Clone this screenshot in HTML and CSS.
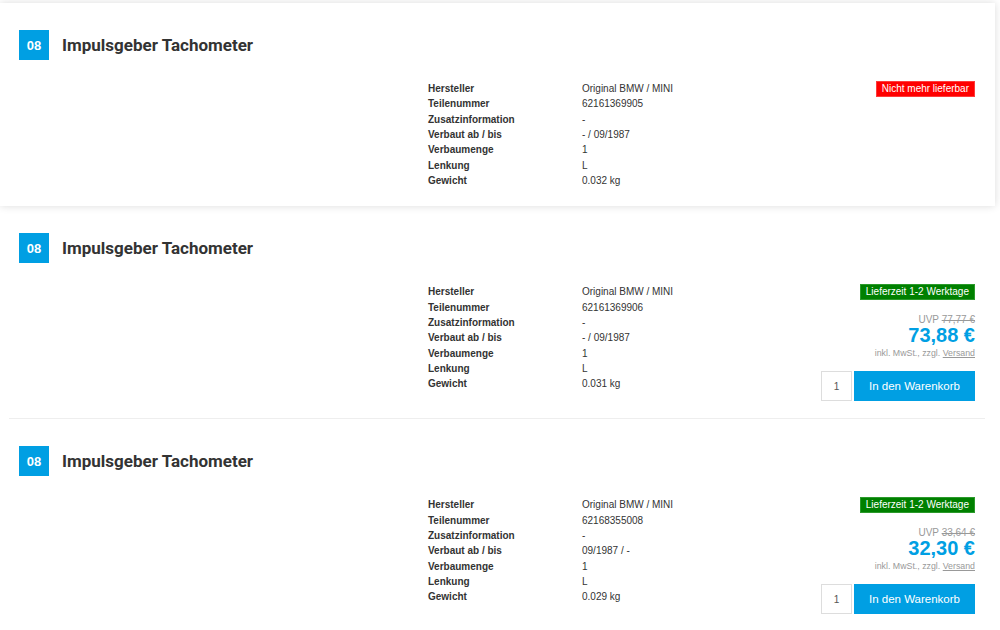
FILE: index.html
```html
<!DOCTYPE html>
<html lang="de">
<head>
    <meta charset="UTF-8">
    <meta name="viewport" content="width=device-width, initial-scale=1.0">
    <title>Impulsgeber Tachometer</title>
    <link rel="stylesheet" href="styles.css">
</head>
<body>
    <div class="part-list">

        <div class="part is-hover">
            <div class="part-inner">
                <div class="part-head">
                    <div class="pos">08</div>
                    <div class="part-title">Impulsgeber Tachometer</div>
                </div>
                <div class="part-body">
                    <div class="part-image"></div>
                    <div class="specs">
                        <div class="spec-label">Hersteller</div><div class="spec-value">Original BMW / MINI</div>
                        <div class="spec-label">Teilenummer</div><div class="spec-value">62161369905</div>
                        <div class="spec-label">Zusatzinformation</div><div class="spec-value">-</div>
                        <div class="spec-label">Verbaut ab / bis</div><div class="spec-value">- / 09/1987</div>
                        <div class="spec-label">Verbaumenge</div><div class="spec-value">1</div>
                        <div class="spec-label">Lenkung</div><div class="spec-value">L</div>
                        <div class="spec-label">Gewicht</div><div class="spec-value">0.032 kg</div>
                    </div>
                    <div class="buy">
                        <span class="status status-out">Nicht mehr lieferbar</span>
                    </div>
                </div>
            </div>
        </div>

        <div class="part">
            <div class="part-inner">
                <div class="part-head">
                    <div class="pos">08</div>
                    <div class="part-title">Impulsgeber Tachometer</div>
                </div>
                <div class="part-body">
                    <div class="part-image"></div>
                    <div class="specs">
                        <div class="spec-label">Hersteller</div><div class="spec-value">Original BMW / MINI</div>
                        <div class="spec-label">Teilenummer</div><div class="spec-value">62161369906</div>
                        <div class="spec-label">Zusatzinformation</div><div class="spec-value">-</div>
                        <div class="spec-label">Verbaut ab / bis</div><div class="spec-value">- / 09/1987</div>
                        <div class="spec-label">Verbaumenge</div><div class="spec-value">1</div>
                        <div class="spec-label">Lenkung</div><div class="spec-value">L</div>
                        <div class="spec-label">Gewicht</div><div class="spec-value">0.031 kg</div>
                    </div>
                    <div class="buy">
                        <span class="status status-ok">Lieferzeit 1-2 Werktage</span>
                        <div class="uvp">UVP <s>77,77 €</s></div>
                        <div class="price">73,88 €</div>
                        <div class="tax">inkl. MwSt., zzgl. <a href="#">Versand</a></div>
                        <div class="cart">
                            <input class="qty" type="text" value="1">
                            <button class="cart-button">In den Warenkorb</button>
                        </div>
                    </div>
                </div>
            </div>
        </div>

        <div class="part">
            <div class="part-inner">
                <div class="part-head">
                    <div class="pos">08</div>
                    <div class="part-title">Impulsgeber Tachometer</div>
                </div>
                <div class="part-body">
                    <div class="part-image"></div>
                    <div class="specs">
                        <div class="spec-label">Hersteller</div><div class="spec-value">Original BMW / MINI</div>
                        <div class="spec-label">Teilenummer</div><div class="spec-value">62168355008</div>
                        <div class="spec-label">Zusatzinformation</div><div class="spec-value">-</div>
                        <div class="spec-label">Verbaut ab / bis</div><div class="spec-value">09/1987 / -</div>
                        <div class="spec-label">Verbaumenge</div><div class="spec-value">1</div>
                        <div class="spec-label">Lenkung</div><div class="spec-value">L</div>
                        <div class="spec-label">Gewicht</div><div class="spec-value">0.029 kg</div>
                    </div>
                    <div class="buy">
                        <span class="status status-ok">Lieferzeit 1-2 Werktage</span>
                        <div class="uvp">UVP <s>33,64 €</s></div>
                        <div class="price">32,30 €</div>
                        <div class="tax">inkl. MwSt., zzgl. <a href="#">Versand</a></div>
                        <div class="cart">
                            <input class="qty" type="text" value="1">
                            <button class="cart-button">In den Warenkorb</button>
                        </div>
                    </div>
                </div>
            </div>
        </div>

    </div>
</body>
</html>
```

FILE: styles.css
```css
* {
    margin: 0;
    padding: 0;
    box-sizing: border-box;
}

body {
    font-family: "Liberation Sans", Arial, sans-serif;
    background-color: #fff;
    color: #333;
    font-size: 10px;
    overflow: hidden;
}

.part-list {
    width: 995px;
    padding-top: 3px;
}

.part {
    padding: 0 10px 0 9px;
    background-color: #fff;
}

.part-inner {
    padding: 27px 10px 17px 10px;
    border-bottom: 1px solid #eee;
}

.part.is-hover {
    box-shadow: 0 0 8px rgba(0, 0, 0, 0.14);
    position: relative;
}

.part.is-hover .part-inner {
    border-bottom-color: transparent;
}

.part-head {
    display: flex;
    align-items: center;
    gap: 13px;
    height: 30px;
}

.pos {
    width: 30px;
    height: 30px;
    background-color: #009fe3;
    color: #fff;
    font-weight: bold;
    font-size: 13px;
    display: flex;
    align-items: center;
    justify-content: center;
}

.part-title {
    font-family: Roboto, "Liberation Sans", sans-serif;
    font-weight: 700;
    font-size: 17px;
    color: #333;
}

.part-body {
    display: grid;
    grid-template-columns: 409px 1fr auto;
    margin-top: 21px;
}

.specs {
    display: grid;
    grid-template-columns: 154px 1fr;
    align-content: start;
    line-height: 15.33px;
    font-size: 10px;
}

.spec-label {
    font-weight: bold;
    color: #333;
}

.spec-value {
    color: #333;
}

.buy {
    display: flex;
    flex-direction: column;
    align-items: flex-end;
}

.status {
    display: block;
    color: #fff;
    font-size: 10px;
    line-height: 14px;
    padding: 0 5px;
    border: 1px solid;
}

.status-out {
    background-color: #f00;
    border-color: #ff3b3b;
}

.status-ok {
    background-color: #008000;
    border-color: #2b9a2b;
}

.uvp {
    margin-top: 14px;
    color: #999;
    font-size: 10px;
    line-height: 12px;
}

.price {
    color: #009fe3;
    font-weight: bold;
    font-size: 20px;
    line-height: 18px;
}

.tax {
    margin-top: 3px;
    color: #999;
    font-size: 8.8px;
    line-height: 12px;
}

.tax a {
    color: #999;
}

.cart {
    display: flex;
    gap: 2px;
    margin-top: 12px;
}

.qty {
    width: 31px;
    height: 30px;
    border: 1px solid #ddd;
    text-align: center;
    font-family: "Liberation Sans", Arial, sans-serif;
    font-size: 10px;
    color: #555;
    outline: none;
}

.cart-button {
    width: 121px;
    height: 30px;
    border: none;
    background-color: #009fe3;
    color: #fff;
    font-family: "Liberation Sans", Arial, sans-serif;
    font-size: 11.5px;
    cursor: pointer;
}
```
